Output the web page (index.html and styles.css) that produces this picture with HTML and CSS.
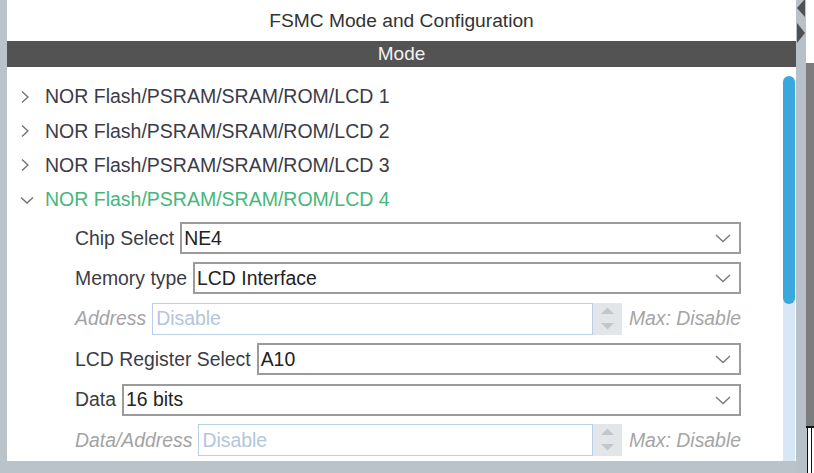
FILE: index.html
```html
<!DOCTYPE html>
<html>
<head>
<meta charset="utf-8">
<link rel="stylesheet" href="styles.css">
</head>
<body>
<div class="screen">
  <div class="gutter"></div>
  <div class="panel">
    <div class="title">FSMC Mode and Configuration</div>
    <div class="modebar">Mode</div>
    <div class="body">
      <div class="content">
        <div class="node">
          <span class="chev"><svg width="10" height="14" viewBox="0 0 10 14"><path d="M2 1.5 L8 7 L2 12.5" fill="none" stroke="#6f6f6f" stroke-width="1.3"/></svg></span>
          <span class="node-label">NOR Flash/PSRAM/SRAM/ROM/LCD 1</span>
        </div>
        <div class="node">
          <span class="chev"><svg width="10" height="14" viewBox="0 0 10 14"><path d="M2 1.5 L8 7 L2 12.5" fill="none" stroke="#6f6f6f" stroke-width="1.3"/></svg></span>
          <span class="node-label">NOR Flash/PSRAM/SRAM/ROM/LCD 2</span>
        </div>
        <div class="node">
          <span class="chev"><svg width="10" height="14" viewBox="0 0 10 14"><path d="M2 1.5 L8 7 L2 12.5" fill="none" stroke="#6f6f6f" stroke-width="1.3"/></svg></span>
          <span class="node-label">NOR Flash/PSRAM/SRAM/ROM/LCD 3</span>
        </div>
        <div class="node">
          <span class="chev"><svg width="14" height="14" viewBox="0 0 14 14"><path d="M1 4.5 L7 10 L13 4.5" fill="none" stroke="#6f6f6f" stroke-width="1.3"/></svg></span>
          <span class="node-label active">NOR Flash/PSRAM/SRAM/ROM/LCD 4</span>
        </div>

        <div class="form">
          <div class="row">
            <span class="label">Chip Select</span>
            <div class="select"><span class="value">NE4</span><svg class="drop" width="16" height="9" viewBox="0 0 16 9"><path d="M1 1 L8 7.5 L15 1" fill="none" stroke="#7a7a7a" stroke-width="1.4"/></svg></div>
          </div>
          <div class="row">
            <span class="label">Memory type</span>
            <div class="select"><span class="value">LCD Interface</span><svg class="drop" width="16" height="9" viewBox="0 0 16 9"><path d="M1 1 L8 7.5 L15 1" fill="none" stroke="#7a7a7a" stroke-width="1.4"/></svg></div>
          </div>
          <div class="row">
            <span class="label disabled">Address</span>
            <div class="input"><span class="placeholder">Disable</span></div>
            <div class="spin"><svg width="29" height="32" viewBox="0 0 29 32"><polygon points="8,11 14.5,4.5 21,11" fill="#c3c7cb"/><polygon points="8,20 14.5,26.5 21,20" fill="#c3c7cb"/></svg></div>
            <span class="max">Max: Disable</span>
          </div>
          <div class="row">
            <span class="label">LCD Register Select</span>
            <div class="select"><span class="value">A10</span><svg class="drop" width="16" height="9" viewBox="0 0 16 9"><path d="M1 1 L8 7.5 L15 1" fill="none" stroke="#7a7a7a" stroke-width="1.4"/></svg></div>
          </div>
          <div class="row">
            <span class="label">Data</span>
            <div class="select"><span class="value">16 bits</span><svg class="drop" width="16" height="9" viewBox="0 0 16 9"><path d="M1 1 L8 7.5 L15 1" fill="none" stroke="#7a7a7a" stroke-width="1.4"/></svg></div>
          </div>
          <div class="row">
            <span class="label disabled">Data/Address</span>
            <div class="input"><span class="placeholder">Disable</span></div>
            <div class="spin"><svg width="29" height="32" viewBox="0 0 29 32"><polygon points="8,11 14.5,4.5 21,11" fill="#c3c7cb"/><polygon points="8,20 14.5,26.5 21,20" fill="#c3c7cb"/></svg></div>
            <span class="max">Max: Disable</span>
          </div>
        </div>
      </div>
      <div class="scroll">
        <div class="thumb"></div>
        <div class="track"></div>
      </div>
    </div>
  </div>
  <div class="strip">
    <svg width="10" height="46" viewBox="0 0 10 46"><polygon points="9,-1 1,8 9,17" fill="#505050"/><polygon points="1,23 9,33 1,43" fill="#505050"/></svg>
  </div>
  <div class="edge">
    <div class="edge-top"></div>
    <div class="edge-dark"></div>
    <div class="edge-box"><div class="edge-inner"></div></div>
  </div>
</div>
</body>
</html>
```
FILE: styles.css
```css
* { box-sizing: border-box; }
html, body { margin: 0; padding: 0; }
body {
  background: #b9c3c9;
  font-family: "Liberation Sans", Arial, sans-serif;
}
.screen {
  display: flex;
  width: 814px;
  height: 473px;
  background: #b9c3c9;
  overflow: hidden;
}
.gutter { width: 7px; flex: none; }
.panel {
  width: 789px;
  flex: none;
  height: 461px;
  display: flex;
  flex-direction: column;
  background: #fff;
}
.title {
  height: 41px;
  line-height: 41px;
  text-align: center;
  font-size: 19.2px;
  color: #333;
}
.modebar {
  height: 26px;
  line-height: 26px;
  background: #525352;
  color: #f2f2f2;
  text-align: center;
  font-size: 19px;
}
.body {
  flex: 1;
  display: flex;
  min-height: 0;
}
.content {
  flex: 1;
  padding-top: 12.5px;
}
.node {
  display: flex;
  align-items: center;
  height: 34.4px;
  padding-left: 13px;
}
.chev {
  width: 25px;
  flex: none;
  display: flex;
  align-items: center;
}
.node-label {
  font-size: 19.5px;
  color: #3c3c48;
}
.node-label.active { color: #45b77b; }

.form {
  padding: 5px 42px 0 68px;
  display: flex;
  flex-direction: column;
  gap: 8.4px;
}
.row {
  display: flex;
  align-items: center;
  height: 32px;
  gap: 6px;
  font-size: 19.4px;
}
.label { color: #3c3c46; white-space: nowrap; }
.label.disabled { color: #a3a3a3; font-style: italic; }
.select {
  flex: 1;
  height: 32px;
  border: 2px solid #9b9b9b;
  display: flex;
  align-items: center;
  justify-content: space-between;
  padding: 0 8px 0 2px;
  background: #fff;
}
.value { color: #222; }
.drop { flex: none; margin-top: 1px; }
.input {
  flex: 1;
  height: 32px;
  border: 1.5px solid #b9cfe7;
  display: flex;
  align-items: center;
  padding-left: 3px;
  margin-right: -6px;
}
.placeholder { color: #b3c6db; }
.spin {
  width: 29px;
  height: 32px;
  flex: none;
  background: #e3e6e9;
}
.spin svg { display: block; }
.max {
  color: #a5a5a5;
  font-style: italic;
  margin-left: 1px;
  white-space: nowrap;
}
.scroll {
  width: 12px;
  flex: none;
  margin-right: 1px;
  padding-top: 9px;
  display: flex;
  flex-direction: column;
}
.thumb {
  height: 228px;
  flex: none;
  background: #3aa8dc;
  border-radius: 6px;
  position: relative;
  z-index: 1;
}
.track {
  flex: 1;
  margin-top: -6px;
  background: #d8e7f5;
}
.strip {
  width: 10px;
  flex: none;
  background: #b7c1c7;
}
.strip svg { display: block; }
.edge {
  width: 8px;
  flex: none;
  display: flex;
  flex-direction: column;
}
.edge-top { height: 63px; background: #fff; }
.edge-dark { height: 365px; background: #7b7d7e; border-bottom: 2px solid #111; }
.edge-box {
  flex: 1;
  background: #fff;
  border-left: 1px solid #111;
  margin-left: 1px;
  padding-left: 3px;
}
.edge-inner { height: 100%; border-left: 1px solid #111; }
```
